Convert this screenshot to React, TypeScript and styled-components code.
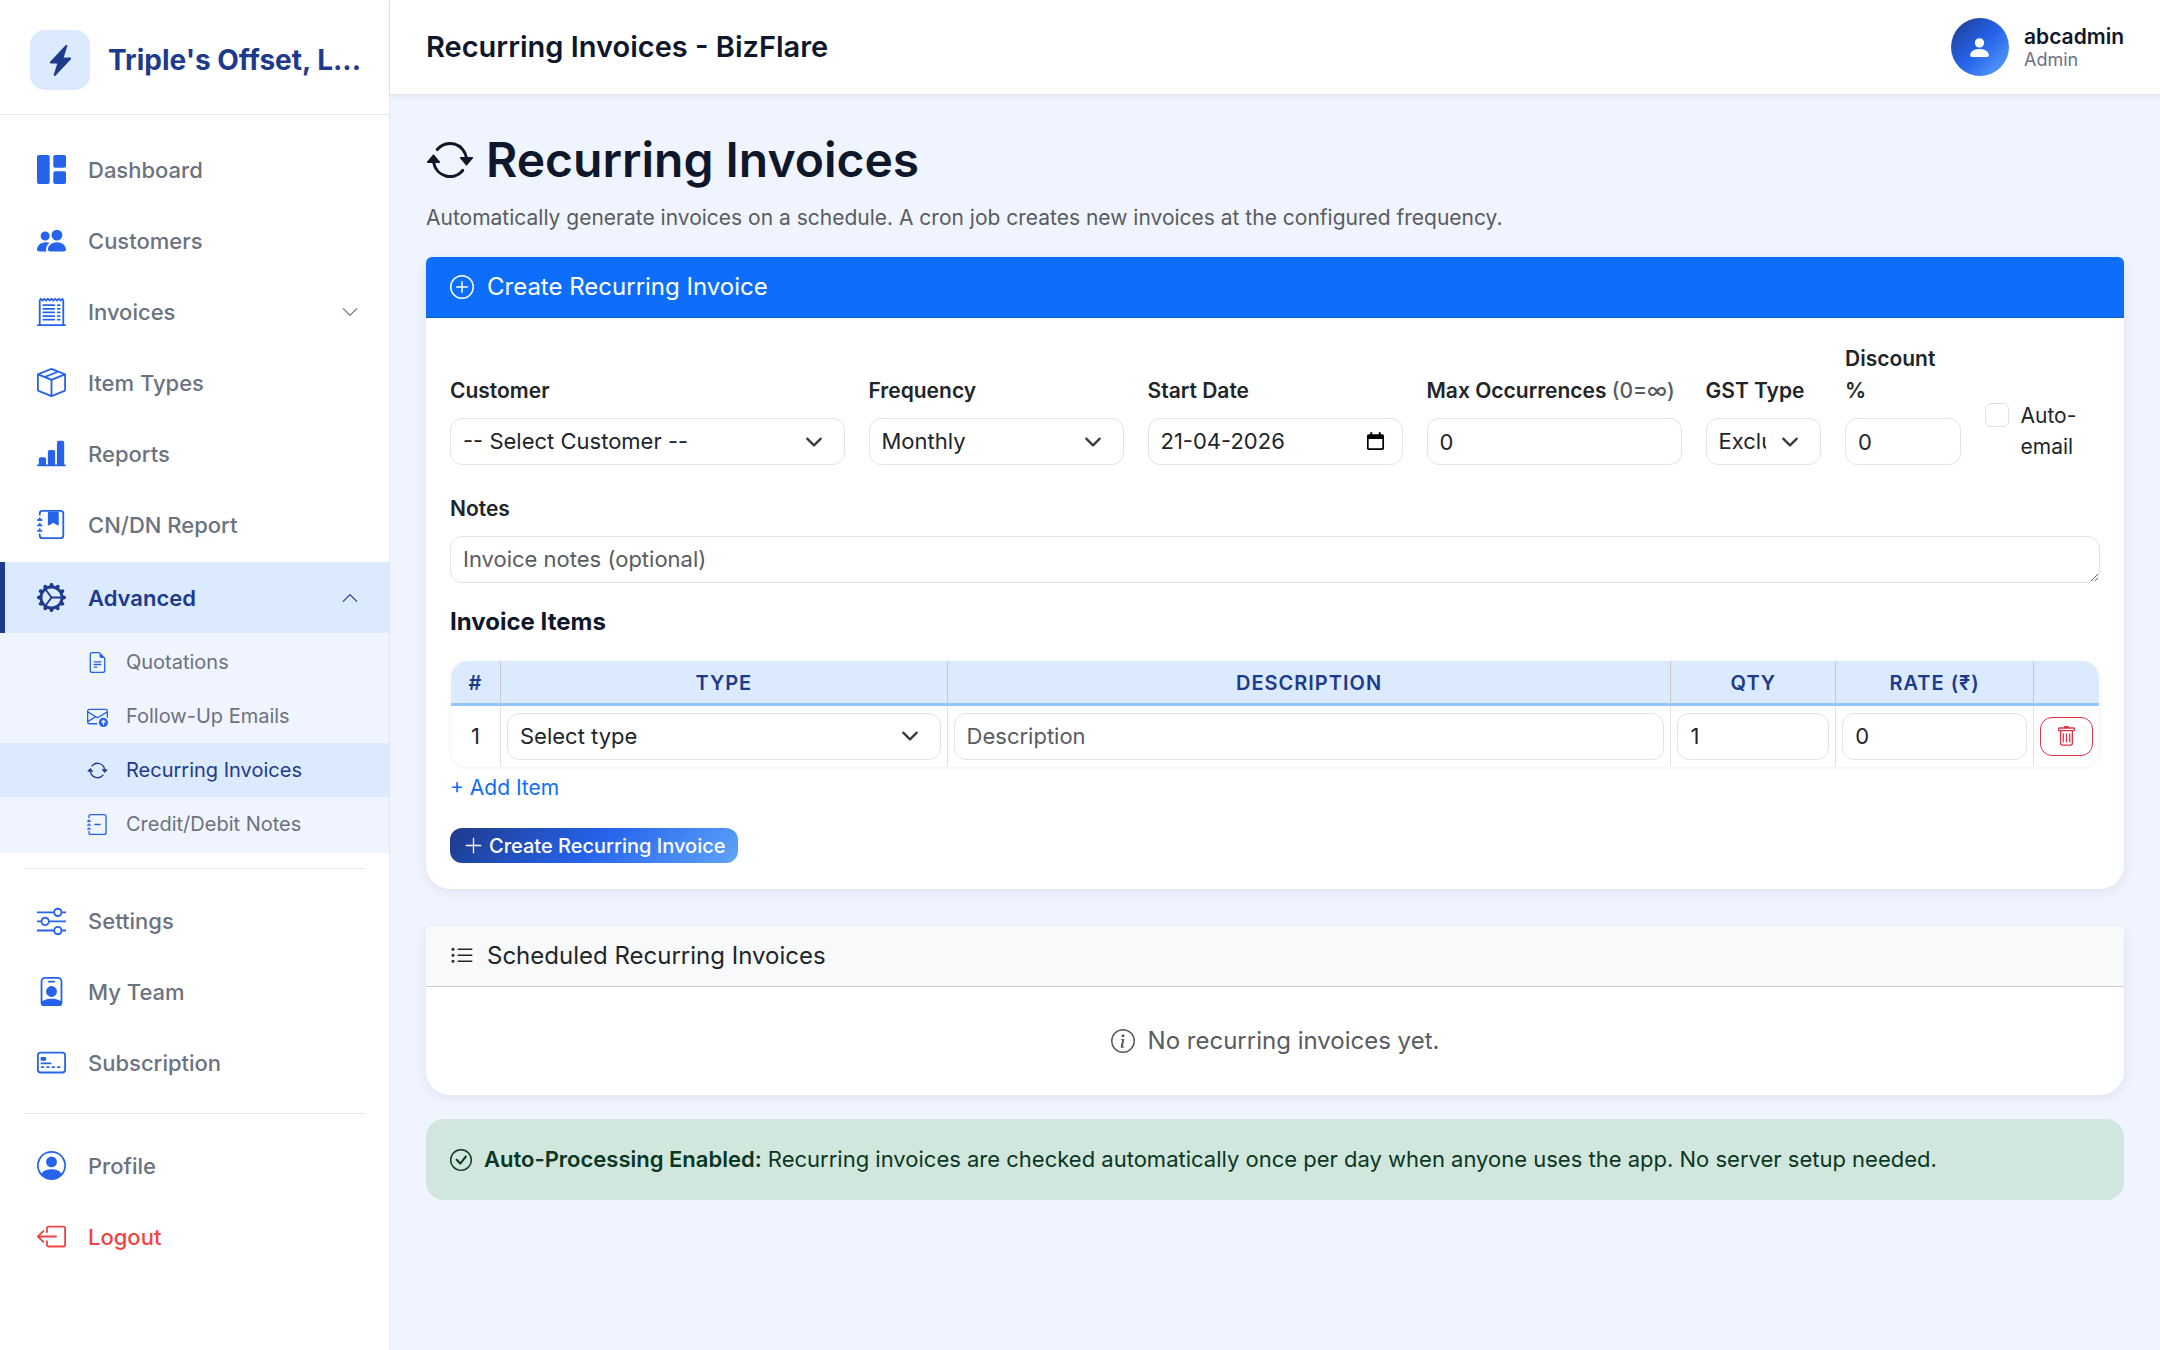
import React from 'react';
import styled, { createGlobalStyle, css } from 'styled-components';
import type { IconType } from 'react-icons';
import {
  BsArrowRepeat,
  BsBarChartLineFill,
  BsBoxArrowLeft,
  BsBoxSeam,
  BsCheckCircle,
  BsChevronDown,
  BsChevronUp,
  BsCreditCard2Front,
  BsEnvelopeArrowUp,
  BsFileEarmarkText,
  BsGearWideConnected,
  BsGrid1X2Fill,
  BsInfoCircle,
  BsJournalBookmarkFill,
  BsJournalMinus,
  BsLightningChargeFill,
  BsListUl,
  BsPeopleFill,
  BsPersonBadge,
  BsPersonCircle,
  BsPersonFill,
  BsPlusCircle,
  BsPlusLg,
  BsReceiptCutoff,
  BsSliders,
  BsTrash,
} from 'react-icons/bs';

const color = {
  navy: '#1e3a8a',
  blue: '#2563eb',
  primary: '#0d6efd',
  pale: '#dbeafe',
  page: '#f0f4ff',
  ink: '#0f172a',
  text: '#212529',
  muted: '#6b7280',
  soft: '#595c5f',
  line: '#e5e7eb',
  field: '#e1e4e9',
  danger: '#dc3545',
};

const gradient = `linear-gradient(135deg, ${color.navy} 0%, ${color.blue} 50%, #60a5fa 100%)`;

const GlobalStyle = createGlobalStyle`
  *, *::before, *::after { box-sizing: border-box; }
  body {
    margin: 0;
    background: ${color.page};
    color: ${color.text};
    font-family: Inter, "Liberation Sans", sans-serif;
    font-size: 24px;
    line-height: 36px;
  }
  button, input, select, textarea { font: inherit; color: inherit; margin: 0; }
  a { color: inherit; text-decoration: none; }
  svg { display: block; flex-shrink: 0; }
`;

/* ---------- shell ---------- */

const Shell = styled.div`
  display: grid;
  grid-template-columns: 390px minmax(0, 1fr);
  min-height: 100vh;
`;

const Sidebar = styled.aside`
  background: #fff;
  border-right: 1px solid ${color.line};
`;

const Brand = styled.a`
  display: flex;
  align-items: center;
  gap: 18px;
  padding: 30px 20px 24px 30px;
  border-bottom: 1px solid ${color.line};
`;

const BrandMark = styled.span`
  display: grid;
  place-items: center;
  flex: none;
  width: 60px;
  height: 60px;
  border-radius: 15px;
  background: ${color.pale};
  color: ${color.navy};
  font-size: 31px;
`;

const BrandName = styled.span`
  color: ${color.navy};
  font-size: 28px;
  font-weight: 700;
  white-space: nowrap;
`;

const Nav = styled.nav`
  padding: 19px 0;
`;

const NavGroup = styled.div`
  margin-bottom: 2px;
`;

const NavLink = styled.a<{ $active?: boolean; $danger?: boolean }>`
  display: flex;
  align-items: center;
  gap: 22px;
  height: 71px;
  padding: 0 30px 0 32px;
  border-left: 5px solid transparent;
  color: ${color.muted};
  font-size: 22px;
  font-weight: 500;

  > svg:first-child { font-size: 29px; color: ${color.blue}; }
  > svg:last-child { font-size: 18px; margin-left: auto; }

  ${(p) => p.$active && css`
    background: ${color.pale};
    border-left-color: ${color.navy};
    color: ${color.navy};
    font-weight: 600;
    > svg:first-child { color: ${color.navy}; }
  `}
  ${(p) => p.$danger && css`
    color: #ef4444;
    > svg:first-child { color: #ef4444; }
  `}
`;

const SubNav = styled.div`
  padding: 2px 0;
  background: ${color.page};
`;

const SubLink = styled.a<{ $active?: boolean }>`
  display: flex;
  align-items: center;
  gap: 18px;
  height: 54px;
  padding-left: 87px;
  font-size: 20px;
  color: ${(p) => (p.$active ? color.navy : color.muted)};
  background: ${(p) => (p.$active ? color.pale : 'transparent')};

  svg { font-size: 21px; color: ${(p) => (p.$active ? color.navy : color.blue)}; }
`;

const Divider = styled.hr`
  height: 1px;
  margin: 15px 24px 16px;
  border: 0;
  background: ${color.line};
`;

const TopBar = styled.header`
  display: flex;
  align-items: center;
  justify-content: space-between;
  height: 95px;
  padding: 0 36px;
  background: #fff;
  border-bottom: 1px solid ${color.line};
  box-shadow: 0 2px 5px rgba(15, 23, 42, 0.06);
`;

const TopTitle = styled.div`
  color: ${color.ink};
  font-size: 29px;
  font-weight: 600;
`;

const User = styled.div`
  display: flex;
  align-items: center;
  gap: 15px;
`;

const Avatar = styled.span`
  display: grid;
  place-items: center;
  width: 58px;
  height: 58px;
  border-radius: 50%;
  background: ${gradient};
  color: #fff;
  font-size: 25px;
`;

const UserName = styled.div`
  color: ${color.ink};
  font-size: 21px;
  font-weight: 600;
  line-height: 25px;
`;

const UserRole = styled.div`
  color: ${color.muted};
  font-size: 18px;
  line-height: 22px;
`;

/* ---------- content ---------- */

const Content = styled.main`
  padding: 36px;
`;

const PageTitle = styled.h1`
  display: flex;
  align-items: center;
  gap: 12px;
  margin: 0 0 13px;
  color: ${color.ink};
  font-size: 48px;
  font-weight: 600;
  line-height: 58px;
`;

const Lead = styled.p`
  margin: 0 0 23px;
  color: ${color.soft};
  font-size: 21px;
  line-height: 32px;
`;

const Card = styled.section`
  border-radius: 6px 6px 24px 24px;
  background: #fff;
  box-shadow: 0 3px 12px rgba(15, 23, 42, 0.08);

  & + & { margin-top: 37px; }
`;

const CardHeader = styled.h2<{ $primary?: boolean }>`
  display: flex;
  align-items: center;
  gap: 13px;
  margin: 0;
  padding: 12px 24px;
  border-bottom: 1px solid ${(p) => (p.$primary ? '#0b5bd1' : '#cccdce')};
  border-radius: 6px 6px 0 0;
  background: ${(p) => (p.$primary ? color.primary : '#f8f9fa')};
  color: ${(p) => (p.$primary ? '#fff' : color.text)};
  font-size: 24px;
  font-weight: 400;
`;

const Form = styled.form`
  padding: 25px 24px 26px;
`;

const FieldGrid = styled.div`
  display: grid;
  grid-template-columns: repeat(12, minmax(0, 1fr));
  column-gap: 24px;
  row-gap: 28px;
  align-items: end;
`;

const Field = styled.div<{ $span: number }>`
  grid-column: span ${(p) => p.$span};
  display: flex;
  flex-direction: column;
`;

const Label = styled.label`
  margin-bottom: 11px;
  font-size: 21px;
  font-weight: 600;
  line-height: 32px;

  span { color: ${color.soft}; font-weight: 500; }
`;

const controlStyle = css`
  display: block;
  width: 100%;
  height: 47px;
  padding: 6px 12px;
  border: 1px solid ${color.field};
  border-radius: 12px;
  background-color: #fff;
  color: ${color.text};
  font-size: 22px;
  line-height: 33px;
  outline: none;

  &::placeholder { color: ${color.soft}; opacity: 1; }
  &:focus { border-color: ${color.blue}; }
`;

const Input = styled.input`
  ${controlStyle}
`;

const TextArea = styled.textarea`
  ${controlStyle}
  resize: vertical;
`;

const Select = styled.select`
  ${controlStyle}
  appearance: none;
  padding-right: 54px;
  background-image: url("data:image/svg+xml,%3csvg xmlns='http://www.w3.org/2000/svg' viewBox='0 0 16 16'%3e%3cpath fill='none' stroke='%23343a40' stroke-linecap='round' stroke-linejoin='round' stroke-width='2' d='m2 5 6 6 6-6'/%3e%3c/svg%3e");
  background-repeat: no-repeat;
  background-position: right 18px center;
  background-size: 24px 18px;
`;

const DateBox = styled.div`
  ${controlStyle}
  display: flex;
  align-items: center;
  padding-right: 16px;
`;

const DateInput = styled.input`
  flex: 1;
  min-width: 0;
  padding: 0;
  border: 0;
  background: none;
  outline: none;
`;

const PickerButton = styled.button`
  padding: 0;
  border: 0;
  background: none;
  color: #000;
  cursor: pointer;
`;

const CheckRow = styled.div`
  grid-column: span 1;
  display: flex;
  align-items: flex-start;
  gap: 12px;
  margin-bottom: 3px;
  font-size: 21px;
  line-height: 31px;
`;

const CheckBox = styled.input`
  appearance: none;
  flex: none;
  width: 24px;
  height: 24px;
  margin-top: 3px;
  border: 1px solid #dee2e6;
  border-radius: 6px;
  background: #fff;

  &:checked { background: ${color.primary}; border-color: ${color.primary}; }
`;

const SectionTitle = styled.h3`
  margin: 24px 0;
  color: ${color.ink};
  font-size: 24px;
  font-weight: 700;
  line-height: 29px;
`;

const TableFrame = styled.div`
  overflow: hidden;
  border: 1px solid #fbfbfd;
  border-radius: 18px;
  box-shadow: 0 1px 4px rgba(15, 23, 42, 0.06);
`;

const ItemTable = styled.table`
  width: 100%;
  table-layout: fixed;
  border-collapse: separate;
  border-spacing: 0;
`;

const Col = styled.col<{ $width?: string }>`
  width: ${(p) => p.$width ?? 'auto'};
`;

const HeadCell = styled.th`
  height: 45px;
  padding: 1px 0 0;
  border-right: 1px solid #c6c8ca;
  border-bottom: 3px solid #93c5fd;
  background: ${color.pale};
  color: ${color.navy};
  font-size: 20px;
  font-weight: 600;
  line-height: 30px;
  letter-spacing: 1px;
  text-align: center;
  text-transform: uppercase;

  &:last-child { border-right: 0; }
`;

const Cell = styled.td`
  height: 60px;
  padding: 6px;
  border-right: 1px solid ${color.field};
  font-size: 22px;
  text-align: center;
  vertical-align: middle;

  &:last-child { border-right: 0; }
`;

const RemoveButton = styled.button`
  display: grid;
  place-items: center;
  width: 100%;
  height: 39px;
  padding: 0;
  border: 1px solid ${color.danger};
  border-radius: 12px;
  background: transparent;
  color: ${color.danger};
  font-size: 21px;
  cursor: pointer;
`;

const AddButton = styled.button`
  display: block;
  margin: 5px 0 24px;
  padding: 0;
  border: 0;
  background: none;
  color: ${color.primary};
  font-size: 21px;
  line-height: 32px;
  cursor: pointer;
`;

const SubmitButton = styled.button`
  display: flex;
  align-items: center;
  gap: 5px;
  height: 35px;
  padding: 0 13px;
  border: 0;
  border-radius: 12px;
  background: ${gradient};
  color: #fff;
  font-size: 20px;
  font-weight: 500;
  cursor: pointer;

  svg { font-size: 21px; }
`;

const Empty = styled.p`
  display: flex;
  align-items: center;
  justify-content: center;
  gap: 13px;
  margin: 0;
  padding: 36px;
  color: ${color.soft};
`;

const Notice = styled.div`
  display: flex;
  align-items: center;
  gap: 12px;
  margin-top: 24px;
  padding: 24px;
  border-radius: 18px;
  background: #d1e7dd;
  color: #0a3622;
  font-size: 22px;
  line-height: 33px;

  strong { font-weight: 600; }
`;

const CalendarGlyph = () => (
  <svg width="21" height="21" viewBox="0 0 16 16" fill="currentColor" aria-hidden="true">
    <path
      fillRule="evenodd"
      d="M4 1h1.5v1.5h5V1H12v1.5h1.2c.7 0 1.3.6 1.3 1.3v9.4c0 .7-.6 1.3-1.3 1.3H2.8c-.7 0-1.3-.6-1.3-1.3V3.8c0-.7.6-1.3 1.3-1.3H4V1zM2.8 6v7.2h10.4V6H2.8z"
    />
  </svg>
);

const mainLinks: { label: string; icon: IconType; expandable?: boolean }[] = [
  { label: 'Dashboard', icon: BsGrid1X2Fill },
  { label: 'Customers', icon: BsPeopleFill },
  { label: 'Invoices', icon: BsReceiptCutoff, expandable: true },
  { label: 'Item Types', icon: BsBoxSeam },
  { label: 'Reports', icon: BsBarChartLineFill },
  { label: 'CN/DN Report', icon: BsJournalBookmarkFill },
];

const advancedLinks: { label: string; icon: IconType; active?: boolean }[] = [
  { label: 'Quotations', icon: BsFileEarmarkText },
  { label: 'Follow-Up Emails', icon: BsEnvelopeArrowUp },
  { label: 'Recurring Invoices', icon: BsArrowRepeat, active: true },
  { label: 'Credit/Debit Notes', icon: BsJournalMinus },
];

const accountLinks: { label: string; icon: IconType }[] = [
  { label: 'Settings', icon: BsSliders },
  { label: 'My Team', icon: BsPersonBadge },
  { label: 'Subscription', icon: BsCreditCard2Front },
];

function SideNavigation() {
  return (
    <Sidebar>
      <Brand href="#">
        <BrandMark><BsLightningChargeFill /></BrandMark>
        <BrandName>Triple's Offset, L...</BrandName>
      </Brand>
      <Nav>
        <NavGroup>
          {mainLinks.map(({ label, icon: Icon, expandable }) => (
            <NavLink href="#" key={label}>
              <Icon />
              <span>{label}</span>
              {expandable && <BsChevronDown />}
            </NavLink>
          ))}
        </NavGroup>
        <NavLink href="#" $active>
          <BsGearWideConnected />
          <span>Advanced</span>
          <BsChevronUp />
        </NavLink>
        <SubNav>
          {advancedLinks.map(({ label, icon: Icon, active }) => (
            <SubLink href="#" key={label} $active={active}>
              <Icon />
              <span>{label}</span>
            </SubLink>
          ))}
        </SubNav>
        <Divider />
        {accountLinks.map(({ label, icon: Icon }) => (
          <NavLink href="#" key={label}>
            <Icon />
            <span>{label}</span>
          </NavLink>
        ))}
        <Divider />
        <NavLink href="#">
          <BsPersonCircle />
          <span>Profile</span>
        </NavLink>
        <NavLink href="#" $danger>
          <BsBoxArrowLeft />
          <span>Logout</span>
        </NavLink>
      </Nav>
    </Sidebar>
  );
}

function CreateForm() {
  return (
    <Form onSubmit={(e) => e.preventDefault()}>
      <FieldGrid>
        <Field $span={3}>
          <Label htmlFor="customer">Customer</Label>
          <Select id="customer"><option>-- Select Customer --</option></Select>
        </Field>
        <Field $span={2}>
          <Label htmlFor="frequency">Frequency</Label>
          <Select id="frequency"><option>Monthly</option></Select>
        </Field>
        <Field $span={2}>
          <Label htmlFor="start">Start Date</Label>
          <DateBox>
            <DateInput id="start" type="text" defaultValue="21-04-2026" />
            <PickerButton type="button" aria-label="Open calendar"><CalendarGlyph /></PickerButton>
          </DateBox>
        </Field>
        <Field $span={2}>
          <Label htmlFor="max">Max Occurrences <span>(0=∞)</span></Label>
          <Input id="max" type="number" defaultValue={0} />
        </Field>
        <Field $span={1}>
          <Label htmlFor="gst">GST Type</Label>
          <Select id="gst"><option>Exclusive</option></Select>
        </Field>
        <Field $span={1}>
          <Label htmlFor="discount">Discount %</Label>
          <Input id="discount" type="number" defaultValue={0} />
        </Field>
        <CheckRow>
          <CheckBox id="auto" type="checkbox" />
          <label htmlFor="auto">Auto-email</label>
        </CheckRow>
        <Field $span={12}>
          <Label htmlFor="notes">Notes</Label>
          <TextArea id="notes" rows={1} placeholder="Invoice notes (optional)" />
        </Field>
      </FieldGrid>

      <SectionTitle>Invoice Items</SectionTitle>
      <TableFrame>
        <ItemTable>
          <colgroup>
            <Col $width="50px" />
            <Col $width="27.1%" />
            <Col />
            <Col $width="10%" />
            <Col $width="12%" />
            <Col $width="65px" />
          </colgroup>
          <thead>
            <tr>
              <HeadCell>#</HeadCell>
              <HeadCell>Type</HeadCell>
              <HeadCell>Description</HeadCell>
              <HeadCell>Qty</HeadCell>
              <HeadCell>Rate (₹)</HeadCell>
              <HeadCell aria-label="Actions" />
            </tr>
          </thead>
          <tbody>
            <tr>
              <Cell>1</Cell>
              <Cell><Select aria-label="Type"><option>Select type</option></Select></Cell>
              <Cell><Input aria-label="Description" placeholder="Description" /></Cell>
              <Cell><Input aria-label="Quantity" type="number" defaultValue={1} /></Cell>
              <Cell><Input aria-label="Rate" type="number" defaultValue={0} /></Cell>
              <Cell><RemoveButton type="button" aria-label="Remove item"><BsTrash /></RemoveButton></Cell>
            </tr>
          </tbody>
        </ItemTable>
      </TableFrame>
      <AddButton type="button">+ Add Item</AddButton>
      <SubmitButton type="submit"><BsPlusLg /> Create Recurring Invoice</SubmitButton>
    </Form>
  );
}

export default function App() {
  return (
    <>
      <GlobalStyle />
      <Shell>
        <SideNavigation />
        <div>
          <TopBar>
            <TopTitle>Recurring Invoices - BizFlare</TopTitle>
            <User>
              <Avatar><BsPersonFill /></Avatar>
              <div>
                <UserName>abcadmin</UserName>
                <UserRole>Admin</UserRole>
              </div>
            </User>
          </TopBar>
          <Content>
            <PageTitle><BsArrowRepeat /> Recurring Invoices</PageTitle>
            <Lead>
              Automatically generate invoices on a schedule. A cron job creates new invoices at the
              configured frequency.
            </Lead>
            <Card>
              <CardHeader $primary><BsPlusCircle /> Create Recurring Invoice</CardHeader>
              <CreateForm />
            </Card>
            <Card>
              <CardHeader><BsListUl /> Scheduled Recurring Invoices</CardHeader>
              <Empty><BsInfoCircle /> No recurring invoices yet.</Empty>
            </Card>
            <Notice>
              <BsCheckCircle />
              <span>
                <strong>Auto-Processing Enabled:</strong> Recurring invoices are checked
                automatically once per day when anyone uses the app. No server setup needed.
              </span>
            </Notice>
          </Content>
        </div>
      </Shell>
    </>
  );
}
